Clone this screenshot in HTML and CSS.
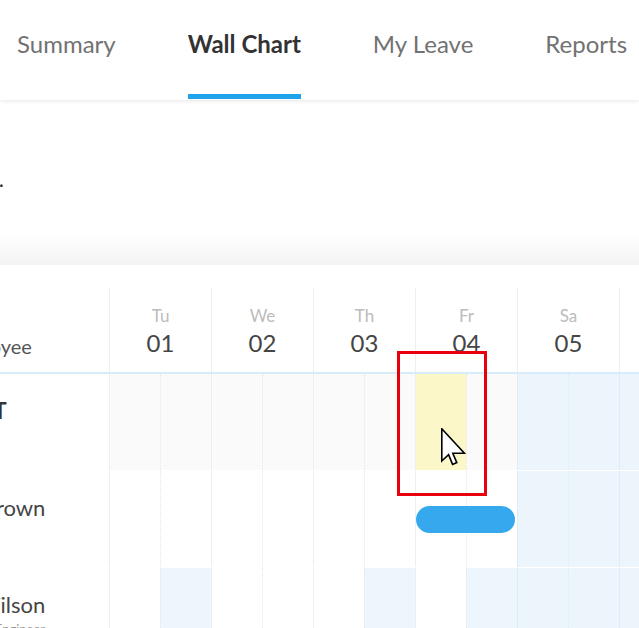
FILE: index.html
```html
<!DOCTYPE html>
<html lang="en">
<head>
    <meta charset="UTF-8">
    <meta name="viewport" content="width=device-width, initial-scale=1.0">
    <title>Wall Chart</title>
    <link rel="stylesheet" href="styles.css">
</head>
<body>
    <div class="page">
        <nav class="tabs">
            <a class="tab">Summary</a>
            <a class="tab active">Wall Chart</a>
            <a class="tab">My Leave</a>
            <a class="tab">Reports</a>
        </nav>

        <div class="toolbar">
            <span class="title">March 2022.</span>
        </div>
        <div class="fade"></div>

        <div class="chart">
            <div class="chart-head">
                <div class="emp-head">Employee</div>
                <div class="day"><span class="dow">Tu</span><span class="date">01</span></div>
                <div class="day"><span class="dow">We</span><span class="date">02</span></div>
                <div class="day"><span class="dow">Th</span><span class="date">03</span></div>
                <div class="day"><span class="dow">Fr</span><span class="date">04</span></div>
                <div class="day"><span class="dow">Sa</span><span class="date">05</span></div>
                <div class="day"><span class="dow">Su</span><span class="date">06</span></div>
            </div>

            <div class="row first">
                <div class="emp"><div class="name bold">ACCT</div></div>
                <div class="cell am"></div><div class="cell pm"></div>
                <div class="cell am"></div><div class="cell pm"></div>
                <div class="cell am"></div><div class="cell pm"></div>
                <div class="cell am sel"></div><div class="cell pm"></div>
                <div class="cell am wk"></div><div class="cell pm wk"></div>
                <div class="cell am wk"></div><div class="cell pm wk"></div>
            </div>

            <div class="row">
                <div class="emp"><div class="name">Jay Brown</div></div>
                <div class="cell am"></div><div class="cell pm"></div>
                <div class="cell am"></div><div class="cell pm"></div>
                <div class="cell am"></div><div class="cell pm"></div>
                <div class="cell am has-pill"><div class="pill"></div></div><div class="cell pm"></div>
                <div class="cell am wk"></div><div class="cell pm wk"></div>
                <div class="cell am wk"></div><div class="cell pm wk"></div>
            </div>

            <div class="row">
                <div class="emp">
                    <div class="name">Liz Wilson</div>
                    <div class="role">Support Engineer</div>
                </div>
                <div class="cell am"></div><div class="cell pm off"></div>
                <div class="cell am"></div><div class="cell pm"></div>
                <div class="cell am"></div><div class="cell pm off"></div>
                <div class="cell am"></div><div class="cell pm off"></div>
                <div class="cell am wk"></div><div class="cell pm wk"></div>
                <div class="cell am wk"></div><div class="cell pm wk"></div>
            </div>
        </div>

        <div class="highlight"></div>
        <svg class="cursor" width="25" height="38" viewBox="0 0 25 38">
            <path d="M0.8 0.8 V33 L7.6 26.6 L11.6 36.4 L15.8 34.6 L11.8 25.2 H23.4 Z" fill="#fff" stroke="#000" stroke-width="1.6" stroke-linejoin="miter"/>
        </svg>
    </div>
</body>
</html>
```

FILE: styles.css
```css
* {
    box-sizing: border-box;
}

html, body {
    margin: 0;
}

body {
    font-family: Lato, 'Open Sans', sans-serif;
    background-color: #ffffff;
    color: #444444;
    width: 639px;
    height: 628px;
    overflow: hidden;
}

.page {
    position: relative;
}

/* tabs */
.tabs {
    position: relative;
    display: flex;
    gap: 72px;
    height: 100px;
    padding-left: 17px;
    box-shadow: 0 1px 4px rgba(0, 0, 0, 0.1);
}

.tab {
    display: block;
    height: 99px;
    padding-top: 30px;
    font-size: 24px;
    line-height: 28px;
    color: #727272;
    white-space: nowrap;
    border-bottom: 5px solid transparent;
}

.tab.active {
    color: #333333;
    font-weight: 700;
    border-color: #1fa3ea;
}

.toolbar {
    height: 133px;
    padding-top: 66px;
}

.title {
    display: block;
    width: 300px;
    margin-left: -296px;
    text-align: right;
    font-size: 22px;
    line-height: 26px;
    color: #333333;
    white-space: nowrap;
}

.fade {
    height: 32px;
    background: linear-gradient(#ffffff, #f3f3f3);
}

/* wall chart */
.chart {
    margin-left: -91px;
    padding-top: 23px;
}

.chart-head {
    display: grid;
    grid-template-columns: 200px repeat(6, 102px);
    height: 86px;
    border-bottom: 2px solid #d6ecfa;
}

.emp-head {
    align-self: end;
    padding: 0 0 14px 37px;
    font-size: 20px;
    line-height: 24px;
    color: #555555;
}

.day {
    display: flex;
    flex-direction: column;
    align-items: center;
    padding-top: 19px;
    border-left: 1px solid #eeeeee;
}

.dow {
    font-size: 17px;
    line-height: 18px;
    color: #bcbcbc;
}

.date {
    margin-top: 5px;
    font-size: 24px;
    line-height: 26px;
    color: #454545;
}

.row {
    display: grid;
    grid-template-columns: 200px repeat(12, 51px);
    height: 97px;
    border-bottom: 1px solid #ffffff;
}

.emp {
    padding: 24px 0 0 37px;
    background-color: #ffffff;
    white-space: nowrap;
}

.name {
    font-size: 22px;
    line-height: 26px;
    color: #454545;
}

.name.bold {
    font-weight: 700;
    letter-spacing: 1.3px;
    color: #333333;
}

.role {
    margin-top: 3px;
    font-size: 13px;
    line-height: 16px;
    color: #999999;
}

.cell {
    border-left: 1px solid #eeeeee;
}

.cell.pm {
    border-left: 1px dotted #e6e6e6;
}

.row.first .cell {
    background-color: #fafafa;
}

.row .cell.wk {
    background-color: #edf5fc;
    border-left-color: #e1ebf4;
}

.cell.off {
    background-color: #eef6fd;
}

.row .cell.sel {
    background-color: #fcf7c8;
}

.cell.has-pill {
    display: flex;
    align-items: center;
}

.pill {
    position: relative;
    flex: none;
    width: 99px;
    height: 27px;
    border-radius: 14px;
    background-color: #36a9ee;
}

/* annotation over the chart */
.highlight {
    position: absolute;
    left: 397px;
    top: 351px;
    width: 90px;
    height: 145px;
    border: 3px solid #e8000d;
}

.cursor {
    position: absolute;
    left: 441px;
    top: 428px;
}
```
